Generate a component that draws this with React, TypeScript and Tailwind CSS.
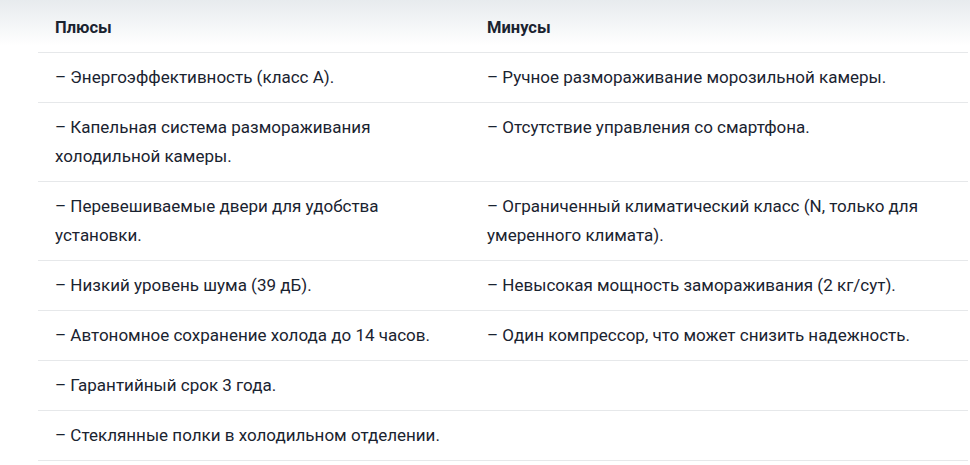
import React from "react";

const rows: [string, string][] = [
  ["– Энергоэффективность (класс А).", "– Ручное размораживание морозильной камеры."],
  [
    "– Капельная система размораживания холодильной камеры.",
    "– Отсутствие управления со смартфона.",
  ],
  [
    "– Перевешиваемые двери для удобства установки.",
    "– Ограниченный климатический класс (N, только для умеренного климата).",
  ],
  ["– Низкий уровень шума (39 дБ).", "– Невысокая мощность замораживания (2 кг/сут)."],
  [
    "– Автономное сохранение холода до 14 часов.",
    "– Один компрессор, что может снизить надежность.",
  ],
  ["– Гарантийный срок 3 года.", ""],
  ["– Стеклянные полки в холодильном отделении.", ""],
];

export default function App() {
  return (
    <div className="min-h-[465px] w-[970px] bg-[linear-gradient(to_bottom,#e7ebee_0px,#ffffff_46px)] pl-[38px] pr-[2px] pt-[3px] font-['Roboto',sans-serif] text-[17px] text-[#1a2330]">
      <table className="w-full table-fixed border-collapse">
        <colgroup>
          <col className="w-[432px]" />
          <col />
        </colgroup>
        <thead>
          <tr className="border-b border-[#e6e8ea]">
            <th className="px-[17px] py-[10px] text-left text-[16.5px] font-bold leading-[29px]">Плюсы</th>
            <th className="px-[17px] py-[10px] text-left text-[16.5px] font-bold leading-[29px]">Минусы</th>
          </tr>
        </thead>
        <tbody>
          {rows.map((r, i) => (
            <tr key={i} className="border-b border-[#e6e8ea]">
              <td className="px-[17px] py-[10px] align-top leading-[29px]">{r[0]}</td>
              <td className="px-[17px] py-[10px] align-top leading-[29px]">{r[1]}</td>
            </tr>
          ))}
        </tbody>
      </table>
    </div>
  );
}
